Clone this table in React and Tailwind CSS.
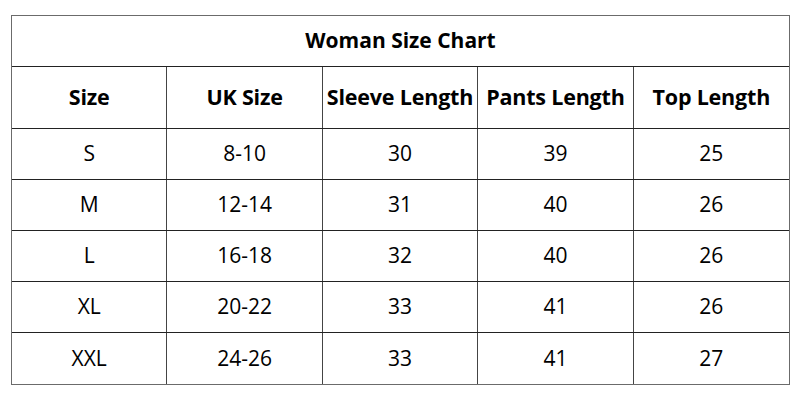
const columns = ["Size", "UK Size", "Sleeve Length", "Pants Length", "Top Length"];

const rows = [
  ["S", "8-10", "30", "39", "25"],
  ["M", "12-14", "31", "40", "26"],
  ["L", "16-18", "32", "40", "26"],
  ["XL", "20-22", "33", "41", "26"],
  ["XXL", "24-26", "33", "41", "27"],
];

export default function App() {
  return (
    <div className="w-[800px] h-[400px] bg-white pt-[15px] pl-[11px] text-black" style={{ fontFamily: '"Open Sans", Lato, sans-serif' }}>
      <div className="w-[779px] border border-[#6b6b6b]">
        {/* Title */}
        <div className="h-[51px] flex items-center justify-center text-[21px] font-bold border-b border-[#222]">
          Woman Size Chart
        </div>

        {/* Header */}
        <div className="grid grid-cols-5 h-[62px] border-b border-[#222]">
          {columns.map((c, i) => (
            <div
              key={c}
              className={`flex items-center justify-center text-[21.5px] font-bold whitespace-nowrap tracking-[-0.2px] ${i < 4 ? "border-r border-[#444]" : ""}`}
            >
              {c}
            </div>
          ))}
        </div>

        {/* Rows */}
        {rows.map((r, ri) => (
          <div key={r[0]} className={`grid grid-cols-5 h-[51px] ${ri < rows.length - 1 ? "border-b border-[#222]" : ""}`}>
            {r.map((v, i) => (
              <div
                key={i}
                className={`flex items-center justify-center text-[21px] ${i < 4 ? "border-r border-[#444]" : ""}`}
              >
                {v}
              </div>
            ))}
          </div>
        ))}
      </div>
    </div>
  );
}
